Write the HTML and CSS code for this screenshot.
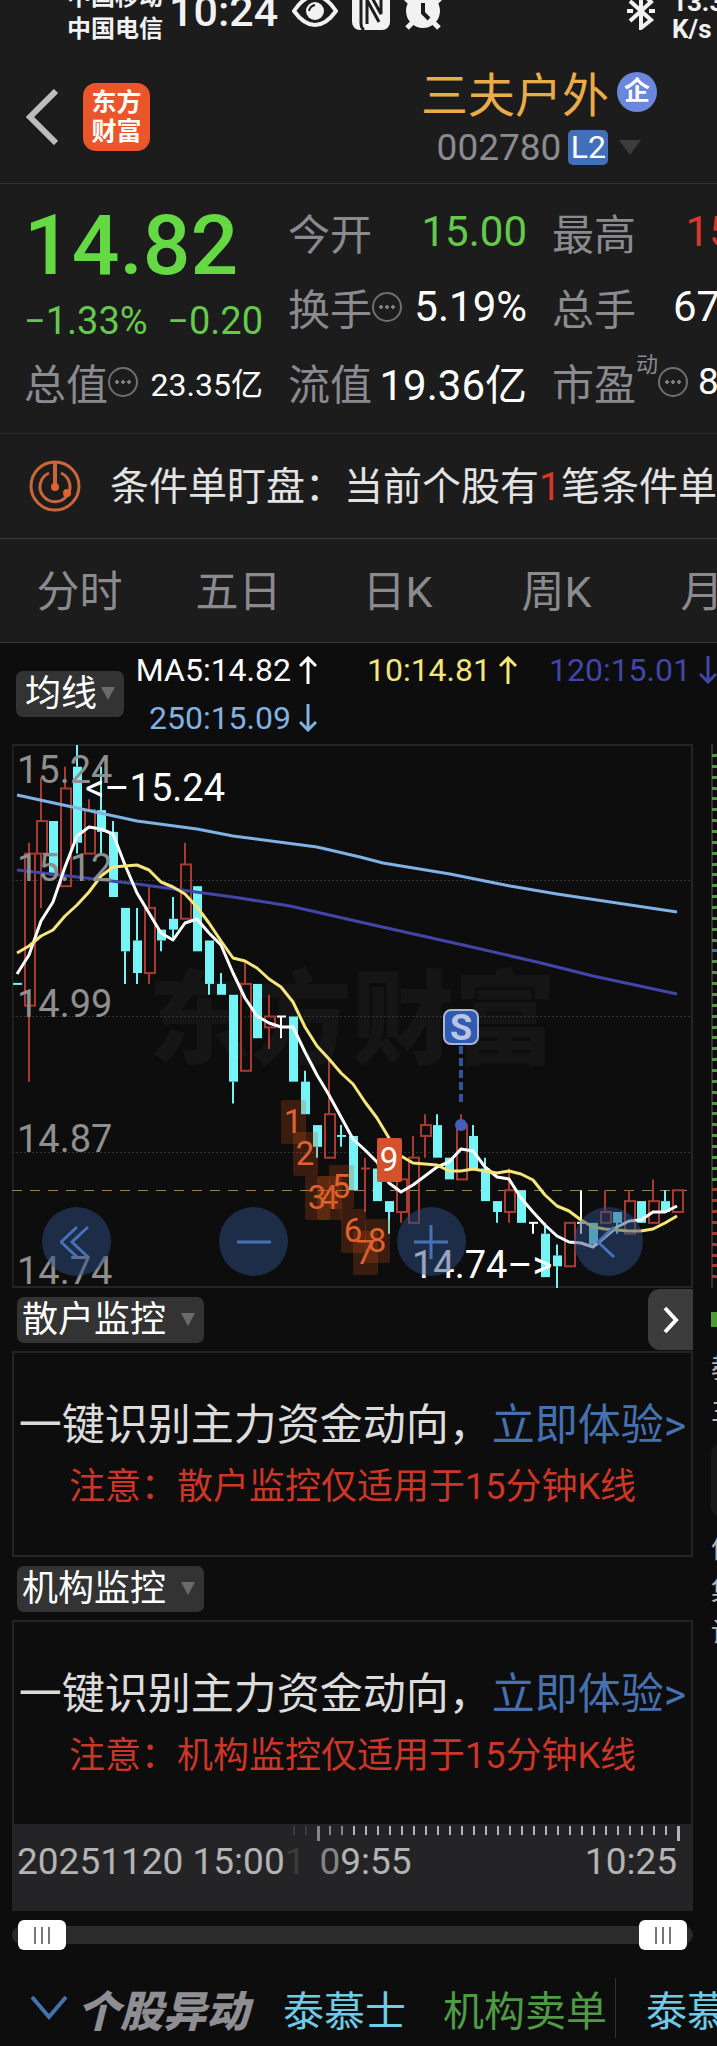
FILE: index.html
```html
<!DOCTYPE html>
<html lang="zh-CN">

<head>
    <meta charset="UTF-8">
    <meta name="viewport" content="width=device-width, initial-scale=1.0">
    <title>三夫户外 002780</title>
    <link rel="stylesheet" href="styles.css">
</head>

<body>
    <div class="status-bar">
        <div class="carrier">
            <span>中国移动</span>
            <span>中国电信</span>
        </div>
        <span class="clock">10:24</span>
        <svg class="status-icon" width="46" height="44" viewBox="0 0 46 44">
            <path d="M2 25 Q12 10 23 10 Q34 10 44 25 Q34 39 23 39 Q12 39 2 25 Z" fill="none" stroke="#f2f2f2" stroke-width="4" />
            <circle cx="23" cy="25" r="9" fill="#f2f2f2" />
            <path d="M17 25 Q18 20 23 19" fill="none" stroke="#1c1c1c" stroke-width="2" />
        </svg>
        <svg class="status-icon" width="38" height="44" viewBox="0 0 38 44">
            <rect x="0" y="4" width="38" height="40" rx="8" fill="#f2f2f2" />
            <path d="M12 44 Q9 42 9 38 V4 M15 38 V14 L27 36 M18 8 L29 28 V8" fill="none" stroke="#1c1c1c" stroke-width="3" />
        </svg>
        <svg class="status-icon" width="38" height="44" viewBox="0 0 38 44">
            <circle cx="19" cy="25" r="17" fill="#f2f2f2" />
            <path d="M8 37 L3 42 M30 37 L35 42 M2 16 L9 9 M36 16 L29 9" stroke="#f2f2f2" stroke-width="5" />
            <path d="M19 17 V27 L25 33" fill="none" stroke="#1c1c1c" stroke-width="4" />
        </svg>
        <svg class="status-icon bluetooth" width="30" height="44" viewBox="0 0 30 44">
            <path d="M4 15 L25 34 L15 42 V6 L25 16 L4 35 M1 25 H7 M23 25 H29" fill="none" stroke="#f2f2f2" stroke-width="4" />
        </svg>
        <div class="speed">
            <span>13.3</span>
            <span>K/s</span>
        </div>
    </div>

    <header class="header">
        <button type="button" class="back" aria-label="返回">
            <svg width="32" height="56" viewBox="0 0 32 56">
                <path d="M30 2 L4 28 L30 54" fill="none" stroke="#bdbdbd" stroke-width="6" />
            </svg>
        </button>
        <div class="logo"><span>东方</span><span>财富</span></div>
        <div class="stock">
            <div class="stock-name">三夫户外<span class="badge-qi">企</span></div>
            <div class="stock-code">002780<span class="badge-l2">L2</span><i class="triangle big"></i></div>
        </div>
    </header>

    <section class="quote">
        <div class="quote-col">
            <div class="price">14.82</div>
            <div class="change"><span>−1.33%</span><span>−0.20</span></div>
            <div class="cell"><span class="name">总值</span><i class="more"></i><span class="value small">23.35亿</span></div>
        </div>
        <div class="quote-col">
            <div class="cell"><span class="name">今开</span><span class="value down">15.00</span></div>
            <div class="cell"><span class="name">换手</span><i class="more"></i><span class="value">5.19%</span></div>
            <div class="cell"><span class="name">流值</span><span class="value">19.36亿</span></div>
        </div>
        <div class="quote-col">
            <div class="cell"><span class="name">最高</span><span class="value up">15.24</span></div>
            <div class="cell"><span class="name">总手</span><span class="value">67432</span></div>
            <div class="cell"><span class="name">市盈</span><span class="sup">动</span><i class="more"></i><span class="value mid">83.24</span></div>
        </div>
    </section>

    <section class="notice">
        <svg width="52" height="52" viewBox="0 0 52 52">
            <g fill="none" stroke="#c9663a" stroke-width="3">
                <circle cx="26" cy="26" r="24" />
                <path d="M20 13 A15 15 0 1 0 32 13" />
                <path d="M26 2 V26" stroke-width="4" />
            </g>
            <circle cx="26" cy="27" r="4" fill="#e0622f" />
            <circle cx="38" cy="33" r="4" fill="#e0622f" />
        </svg>
        <p>条件单盯盘：当前个股有<b>1</b>笔条件单</p>
    </section>

    <nav class="tabs">
        <button type="button">分时</button>
        <button type="button">五日</button>
        <button type="button">日K</button>
        <button type="button">周K</button>
        <button type="button">月K</button>
    </nav>

    <main>
        <div class="legend">
            <label class="picker picker-ma">
                <select aria-label="指标">
                    <option>均线</option>
                </select>
            </label>
            <div class="ma-list">
                <span class="ma5">MA5:14.82<svg width="18" height="28" viewBox="0 0 18 28"><path d="M9 28 V2 M1 10 L9 2 L17 10" /></svg></span>
                <span class="ma10">10:14.81<svg width="18" height="28" viewBox="0 0 18 28"><path d="M9 28 V2 M1 10 L9 2 L17 10" /></svg></span>
                <span class="ma120">120:15.01<svg width="18" height="28" viewBox="0 0 18 28"><path d="M9 0 V26 M1 18 L9 26 L17 18" /></svg></span>
                <span class="ma250">250:15.09<svg width="18" height="28" viewBox="0 0 18 28"><path d="M9 0 V26 M1 18 L9 26 L17 18" /></svg></span>
            </div>
        </div>

        <div class="board">
            <div class="board-main">
                <div class="chart">
                    <svg id="kline" viewBox="0 0 681 544">
                        <text class="watermark" x="136" y="312">东方财富</text>
                        <g class="grid">
                            <path d="M0 136.5 H681 M0 272.5 H681 M0 408.5 H681" stroke-dasharray="2 2" />
                        </g>
                        <rect x="0.5" y="1" width="679.5" height="542" fill="none" stroke="#242424" stroke-width="2" />
                        <path d="M0 446.5 H675" stroke="#9a8250" stroke-dasharray="10 8" />
                        <g id="candles"></g>
                        <g id="lines" fill="none" stroke-width="3" stroke-linejoin="round"></g>
                        <g class="axis">
                            <text x="5" y="39">15.24</text>
                            <text x="5" y="137">15.12</text>
                            <text x="5" y="273">14.99</text>
                            <text x="5" y="408">14.87</text>
                            <text x="5" y="540">14.74</text>
                        </g>
                        <text class="mark" x="213" y="57" text-anchor="end">&lt;–15.24</text>
                        <text class="mark" x="400" y="534">14.74–&gt;</text>
                        <g id="tags"></g>
                        <g>
                            <path d="M449 302 V359" stroke="#34539b" stroke-width="4" stroke-dasharray="8 4" />
                            <circle cx="449" cy="381" r="6" fill="#4560b8" />
                            <rect x="432" y="266" width="34" height="34" rx="7" fill="#2f5bb0" stroke="#a9b6d6" stroke-width="2" />
                            <text class="sell" x="449" y="296" text-anchor="middle">S</text>
                        </g>
                    </svg>
                    <div class="chart-tools">
                        <button type="button" aria-label="最左">
                            <svg width="34" height="34" viewBox="0 0 34 34"><path d="M17 2 L1 17 L17 32 M28 2 L12 17 L28 32" /></svg>
                        </button>
                        <button type="button" aria-label="缩小">
                            <svg width="34" height="34" viewBox="0 0 34 34"><path d="M0 17 H34" /></svg>
                        </button>
                        <button type="button" aria-label="放大">
                            <svg width="34" height="34" viewBox="0 0 34 34"><path d="M0 17 H34 M17 0 V34" /></svg>
                        </button>
                        <button type="button" aria-label="左移">
                            <svg width="34" height="34" viewBox="0 0 34 34"><path d="M23 2 L7 17 L23 32" /></svg>
                        </button>
                    </div>
                </div>

                <div class="bar">
                    <label class="picker">
                        <select aria-label="副图一">
                            <option>散户监控</option>
                        </select>
                    </label>
                    <button type="button" class="next" aria-label="展开">
                        <svg width="16" height="28" viewBox="0 0 16 28"><path d="M2 2 L13 14 L2 26" /></svg>
                    </button>
                </div>
                <div class="panel">
                    <p class="promo">一键识别主力资金动向，<a href="#">立即体验&gt;</a></p>
                    <p class="warn">注意：散户监控仅适用于15分钟K线</p>
                </div>

                <div class="bar">
                    <label class="picker">
                        <select aria-label="副图二">
                            <option>机构监控</option>
                        </select>
                    </label>
                </div>
                <div class="panel">
                    <p class="promo">一键识别主力资金动向，<a href="#">立即体验&gt;</a></p>
                    <p class="warn">注意：机构监控仅适用于15分钟K线</p>
                </div>

                <div class="ruler">
                    <svg id="ticks" viewBox="0 0 681 16"></svg>
                    <div class="times">
                        <span>20251120 15:00</span>
                        <span class="faint">1</span>
                        <span class="from"><i>0</i>9:55</span>
                        <span class="to">10:25</span>
                    </div>
                </div>

                <div class="range">
                    <input type="range" min="0" max="100" value="0" aria-label="起点">
                    <input type="range" min="0" max="100" value="100" aria-label="终点">
                </div>
            </div>

            <aside class="board-side">
                <svg id="depth" width="6" height="544" viewBox="0 0 6 544"></svg>
                <div class="side-dot"></div>
                <div class="side-text"><span>教</span><span>主</span></div>
                <div class="side-box"></div>
                <div class="side-text"><span>信</span><span>集</span><span>设</span></div>
            </aside>
        </div>
    </main>

    <footer class="ticker">
        <svg width="38" height="32" viewBox="0 0 38 32"><path d="M2 5 L19 25 L36 5" fill="none" stroke="#4571b0" stroke-width="4" /></svg>
        <strong>个股异动</strong>
        <span class="who">泰慕士</span>
        <span class="what">机构卖单</span>
        <span class="who next-item">泰慕士</span>
    </footer>

    <script src="script.js"></script>
</body>

</html>
```
FILE: styles.css
```css
* {
    box-sizing: border-box;
}

body {
    margin: 0;
    background-color: #1c1c1c;
    color: #fff;
    font-family: Roboto, "Noto Sans CJK SC", sans-serif;
    overflow-x: hidden;
}

p {
    margin: 0;
}

i {
    font-style: normal;
}

button,
select {
    font-family: inherit;
    color: inherit;
    border: none;
    background: none;
    padding: 0;
    margin: 0;
}

a {
    color: #4571b0;
    text-decoration: none;
}

/* 状态栏 */
.status-bar {
    display: flex;
    align-items: flex-start;
    height: 50px;
    padding-left: 67px;
    overflow: hidden;
    white-space: nowrap;
    color: #f2f2f2;
}

.carrier,
.speed {
    display: flex;
    flex-direction: column;
    font-size: 24px;
    font-weight: bold;
    line-height: 32px;
}

.carrier {
    margin-top: -19px;
}

.speed {
    width: 45px;
    margin: -11px 0 0 16px;
    font-size: 26px;
    line-height: 27px;
}

.clock {
    margin: -12px 14px 0 6px;
    font-size: 43px;
    font-weight: 500;
    line-height: 46px;
}

.status-icon {
    flex: none;
    margin: -14px 14px 0 0;
}

.bluetooth {
    margin: -14px 0 0 auto;
}

/* 标题 */
.header {
    display: flex;
    align-items: center;
    height: 134px;
    padding: 0 60px 0 26px;
    border-bottom: 1px solid #333;
}

.back {
    height: 56px;
}

.logo {
    display: flex;
    flex-direction: column;
    justify-content: center;
    width: 67px;
    height: 68px;
    margin-left: 25px;
    border-radius: 13px;
    background-color: #ea562a;
    font-size: 25px;
    font-weight: bold;
    line-height: 29px;
    text-align: center;
}

.stock {
    display: flex;
    flex-direction: column;
    align-items: center;
    margin-left: auto;
    padding-top: 6px;
}

.stock-name,
.stock-code {
    display: flex;
    align-items: center;
    height: 56px;
}

.stock-name {
    gap: 8px;
    font-size: 47px;
    color: #eaab4a;
}

.stock-code {
    gap: 7px;
    font-size: 37px;
    color: #8a8a8f;
}

.badge-qi {
    width: 40px;
    height: 40px;
    border-radius: 50%;
    background-color: #6b87dc;
    color: #fff;
    font-size: 26px;
    font-weight: bold;
    line-height: 38px;
    text-align: center;
}

.badge-l2 {
    width: 40px;
    height: 35px;
    border-radius: 5px;
    background-color: #4170b8;
    color: #fff;
    font-size: 32px;
    line-height: 35px;
    text-align: center;
}

.triangle {
    border: 7px solid transparent;
    border-top: 12px solid #6b6b6b;
    border-bottom: none;
}

.triangle.big {
    margin-left: 4px;
    border-width: 15px 11px 0;
    border-top-color: #3c3c3c;
}

/* 行情 */
.quote {
    display: grid;
    grid-template-columns: repeat(3, 239px);
    gap: 25px;
    height: 250px;
    padding: 12px 0 0 24px;
    border-bottom: 1px solid #2b2b2b;
    overflow: hidden;
    white-space: nowrap;
}

.price {
    height: 98px;
    color: #65d944;
    font-size: 84px;
    font-weight: 500;
    line-height: 100px;
}

.change {
    display: flex;
    justify-content: space-between;
    height: 52px;
    color: #65c94c;
    font-size: 38px;
    line-height: 54px;
}

.cell {
    display: flex;
    align-items: center;
    height: 75px;
    padding-bottom: 4px;
}

.name {
    color: #8a8a8f;
    font-size: 42px;
}

.more {
    width: 30px;
    height: 30px;
    border: 2px solid #6f6f73;
    border-radius: 50%;
    background: radial-gradient(circle, #7d7d82 2px, transparent 2px) center / 6px 6px repeat-x;
    background-clip: content-box;
    padding: 0 4px;
}

.value {
    margin-left: auto;
    font-size: 42px;
}

.value.mid {
    font-size: 37px;
}

.value.small {
    font-size: 32px;
}

.value.down {
    color: #65c94c;
}

.value.up {
    color: #d8382a;
}

.sup {
    align-self: flex-start;
    color: #8a8a8f;
    font-size: 22px;
    line-height: 38px;
}

/* 条件单 */
.notice {
    display: flex;
    align-items: center;
    gap: 29px;
    height: 105px;
    padding-left: 29px;
    border-bottom: 1px solid #383838;
    overflow: hidden;
    white-space: nowrap;
}

.notice svg {
    flex: none;
}

.notice p {
    padding-bottom: 6px;
    color: #e3e3e3;
    font-size: 39px;
}

.notice b {
    color: #d8382a;
    font-weight: normal;
}

.tabs {
    display: flex;
    height: 104px;
    border-bottom: 1px solid #383838;
    overflow: hidden;
}

.tabs button {
    flex: 0 0 159px;
    padding-bottom: 5px;
    color: #8a8a8f;
    font-size: 43px;
    white-space: nowrap;
}

/* 图表区 */
main {
    background-color: #0d0d0d;
    overflow: hidden;
}

.legend {
    display: flex;
    align-items: center;
    height: 101px;
    padding-left: 16px;
}

.picker {
    display: flex;
    align-items: center;
    position: relative;
    width: 187px;
    height: 46px;
    border-radius: 7px;
    background-color: #333;
}

.picker select {
    appearance: none;
    width: 100%;
    height: 46px;
    padding-left: 5px;
    font-size: 36px;
}

.picker::after {
    content: "";
    position: absolute;
    right: 9px;
    border: 7px solid transparent;
    border-top: 13px solid #6b6b6b;
    border-bottom: none;
    pointer-events: none;
}

.picker-ma {
    flex: none;
    width: 108px;
}

.picker-ma select {
    padding-left: 9px;
}

.ma-list {
    display: grid;
    flex: 1;
    grid-template-columns: 193px 1fr 1fr;
    grid-auto-rows: 48px;
    font-size: 32px;
}

.ma-list span {
    display: flex;
    align-items: center;
    justify-content: flex-end;
    gap: 8px;
}

.ma-list path {
    fill: none;
    stroke: currentColor;
    stroke-width: 3;
}

.ma10 {
    color: #f5e67c;
}

.ma120 {
    color: #4146a8;
}

.ma250 {
    color: #80b2e2;
}

.board {
    display: flex;
    gap: 18px;
    padding-left: 12px;
}

.board-main {
    flex: 1;
    min-width: 0;
}

.chart {
    position: relative;
}

.chart > svg {
    display: block;
    width: 100%;
}

.grid path {
    stroke: #333;
}

.axis text,
.mark {
    font-size: 38px;
    fill: #8f8f8f;
}

.mark {
    fill: #fff;
}

.watermark {
    font-size: 102px;
    font-weight: 900;
    fill: #151515;
}

.sell {
    font-size: 36px;
    font-weight: bold;
    fill: #b9c5e2;
}

.tag {
    font-size: 33px;
    fill: #e0622f;
}

.chart-tools {
    position: absolute;
    left: 30px;
    right: 50px;
    bottom: 12px;
    display: flex;
    justify-content: space-between;
}

.chart-tools button {
    display: flex;
    align-items: center;
    justify-content: center;
    width: 69px;
    height: 69px;
    border-radius: 50%;
    background-color: rgba(46, 76, 130, 0.5);
}

.chart-tools path {
    fill: none;
    stroke: #4673b8;
    stroke-width: 3;
}

.bar {
    display: flex;
    align-items: center;
    justify-content: space-between;
    height: 63px;
    padding-left: 5px;
}

.next {
    display: flex;
    align-items: center;
    justify-content: center;
    width: 45px;
    height: 61px;
    border-radius: 12px 0 0 12px;
    background-color: #3c3c3c;
}

.next path {
    fill: none;
    stroke: #fff;
    stroke-width: 4;
}

.panel {
    height: 206px;
    padding-top: 41px;
    border: 2px solid #242424;
    text-align: center;
    white-space: nowrap;
}

.promo {
    color: #dcdcdc;
    font-size: 43px;
    line-height: 62px;
}

.warn {
    color: #cc3629;
    font-size: 36px;
    line-height: 62px;
}

.ruler {
    height: 85px;
    background-color: #242426;
}

.ruler svg {
    display: block;
    width: 100%;
}

.times {
    display: flex;
    padding: 0 16px 0 5px;
    color: #b4b4b4;
    font-size: 37px;
    line-height: 40px;
    white-space: nowrap;
}

.faint {
    color: #3c3c3c;
}

.from {
    margin-left: 14px;
}

.from i {
    color: #858585;
}

.to {
    margin-left: auto;
}

.range {
    position: relative;
    height: 48px;
    padding-top: 15px;
}

.range::before {
    content: "";
    display: block;
    height: 18px;
    border-radius: 9px;
    background-color: #2b2b2d;
}

/* 两个滑块叠在同一条轨道上 */
.range input {
    position: absolute;
    left: 6px;
    right: 6px;
    top: 9px;
    width: calc(100% - 12px);
    height: 30px;
    margin: 0;
    appearance: none;
    background: none;
    pointer-events: none;
}

.range input::-webkit-slider-thumb {
    appearance: none;
    width: 48px;
    height: 30px;
    border-radius: 6px;
    background:
        linear-gradient(#777, #777) 16px 7px / 2px 17px no-repeat,
        linear-gradient(#777, #777) 23px 7px / 2px 17px no-repeat,
        linear-gradient(#777, #777) 30px 7px / 2px 17px no-repeat,
        #fff;
    pointer-events: auto;
}

/* 右侧盘口，只露出一条边 */
.board-side {
    flex: 0 0 6px;
    overflow: hidden;
}

.board-side svg {
    display: block;
}

.side-dot {
    height: 15px;
    margin: 24px 0 21px;
    background-color: #4f9a35;
}

.side-text {
    display: flex;
    flex-direction: column;
    color: #b4b4b4;
    font-size: 27px;
    line-height: 42px;
}

.side-box {
    width: 60px;
    height: 71px;
    margin: 13px 0 12px;
    border-radius: 8px;
    background-color: #18181a;
}

/* 个股异动 */
.ticker {
    display: flex;
    align-items: center;
    height: 87px;
    padding: 10px 0 0 30px;
    background-color: #0d0d0d;
    font-size: 41px;
    white-space: nowrap;
    overflow: hidden;
}

.ticker svg {
    flex: none;
}

.ticker strong {
    margin: 0 34px 0 9px;
    color: #8e8e93;
    font-size: 43px;
    font-weight: 900;
    font-style: italic;
}

.who {
    color: #6fcbe6;
}

.what {
    margin-left: 37px;
    color: #4f9a45;
}

.next-item {
    margin-left: 8px;
    padding-left: 30px;
    border-left: 1px solid #333;
}
```
FILE: script.js
```js
// 每根K线: 颜色, 最高, 实体上沿, 实体下沿, 最低, 单位为距15.24的分数
var candles = [
    ['d', 22, 22, 22, 22], ['u', 9, 10, 24, 31], ['u', 3, 7, 10, 15], ['d', 7, 7, 12, 12],
    ['u', 2, 4, 13, 13], ['d', 0, 2, 9, 10], ['u', 5, 6, 10, 10], ['d', 2, 6, 8, 10],
    ['d', 7, 8, 14, 14], ['d', 15, 15, 19, 22], ['d', 15, 18, 21, 22], ['u', 13, 15, 21, 22],
    ['d', 17, 17, 18, 19], ['d', 14, 16, 17, 18], ['u', 9, 11, 16, 16], ['d', 13, 13, 19, 19],
    ['d', 18, 18, 22, 23], ['d', 21, 22, 23, 23], ['d', 23, 23, 31, 33], ['u', 20, 22, 30, 30],
    ['d', 22, 22, 27, 27], ['u', 23, 25, 26, 28], ['w', 25, 25, 25, 27], ['d', 25, 25, 31, 31],
    ['d', 30, 31, 34, 34], ['d', 35, 35, 37, 38], ['u', 29, 34, 38, 38], ['d', 35, 36, 36, 37],
    ['d', 36, 36, 41, 41], ['u', 38, 39, 39, 43], ['d', 39, 39, 42, 42], ['d', 42, 42, 43, 45],
    ['u', 39, 40, 43, 44], ['u', 36, 38, 44, 44], ['u', 34, 35, 36, 38], ['d', 34, 35, 38, 38],
    ['d', 38, 38, 40, 40], ['u', 34, 35, 40, 40], ['d', 35, 36, 39, 39], ['d', 38, 39, 42, 42],
    ['d', 42, 42, 43, 44], ['u', 39, 41, 43, 44], ['d', 41, 41, 44, 44], ['w', 44, 44, 44, 45],
    ['d', 44, 45, 49, 49], ['d', 46, 47, 48, 50], ['u', 44, 44, 48, 48], ['w', 41, 44, 44, 45],
    ['d', 44, 44, 46, 46], ['u', 41, 43, 44, 44], ['d', 43, 43, 44, 45], ['u', 41, 42, 45, 45],
    ['d', 42, 42, 44, 44], ['u', 40, 42, 44, 44], ['d', 41, 42, 43, 43], ['u', 41, 41, 43, 43]
];

var ma5 = [230, 211, 177, 158, 123, 92, 83, 85, 90, 121, 149, 169, 189, 196, 179, 175, 189, 201, 229, 254,
    272, 279, 283, 283, 308, 331, 351, 373, 395, 406, 418, 439, 448, 441, 432, 423, 418, 405, 407, 423,
    433, 435, 454, 468, 481, 492, 498, 499, 503, 493, 483, 477, 476, 468, 468, 462];
var ma10 = [209, 202, 192, 186, 172, 161, 148, 132, 123, 122, 121, 126, 138, 143, 150, 163, 179, 197, 214, 217,
    224, 235, 243, 258, 283, 302, 315, 329, 340, 358, 374, 394, 412, 419, 420, 421, 427, 427, 425, 427,
    429, 427, 430, 436, 451, 462, 467, 476, 483, 485, 486, 487, 487, 485, 479, 472];

var colors = { u: '#a83a32', d: '#74f4f4', w: '#fff' };
var unit = 10.86;
var step = 12;

function toPoints(list) {
    return list.map(function (y, i) { return (5 + i * step) + ',' + y; }).join(' ');
}

function line(x1, y1, x2, y2, color) {
    return '<path d="M' + x1 + ' ' + y1 + ' L' + x2 + ' ' + y2 + '" stroke="' + color + '" stroke-width="2"/>';
}

function drawCandles() {
    var html = '';
    candles.forEach(function (k, i) {
        var x = 5 + i * step;
        var c = colors[k[0]];
        var high = k[1] * unit + 1, top = k[2] * unit + 1, bottom = k[3] * unit + 1, low = k[4] * unit + 1;
        html += line(x, high, x, top, c) + line(x, bottom, x, low, c);
        if (k[2] === k[3]) {
            html += line(x - 4, top, x + 5, top, c);
        } else if (k[0] === 'u') {
            html += '<rect x="' + (x - 4) + '" y="' + top + '" width="10" height="' + (bottom - top) + '" fill="none" stroke="' + c + '" stroke-width="2"/>';
        } else {
            html += '<rect x="' + (x - 4) + '" y="' + top + '" width="9" height="' + (bottom - top) + '" fill="' + c + '"/>';
        }
    });
    document.getElementById('candles').innerHTML = html;
}

function drawLines() {
    var ma120 = '5,126 125,140 221,153 278,162 348,178 451,201 525,218 581,232 665,250';
    var ma250 = '5,51 125,77 185,85 221,92 305,103 348,113 371,119 438,130 498,142 545,150 605,159 665,168';
    document.getElementById('lines').innerHTML =
        '<polyline points="' + ma250 + '" stroke="#7fb2e5"/>' +
        '<polyline points="' + ma120 + '" stroke="#4146a8"/>' +
        '<polyline points="' + toPoints(ma5) + '" stroke="#fff"/>' +
        '<polyline points="' + toPoints(ma10) + '" stroke="#f5e67c"/>';
}

// 九转序列
function drawTags() {
    var tags = [[269, 356], [281, 388], [293, 432], [305, 432], [317, 421], [329, 465], [341, 487], [353, 475], [365, 394]];
    document.getElementById('tags').innerHTML = tags.map(function (t, i) {
        var last = i === 8;
        return '<rect x="' + t[0] + '" y="' + t[1] + '" width="25" height="44" rx="2" fill="' + (last ? '#d4522b' : 'rgba(200,80,25,0.25)') + '"/>' +
            '<text class="tag" text-anchor="middle" x="' + (t[0] + 12) + '" y="' + (t[1] + 33) + '"' + (last ? ' style="fill:#fff"' : '') + '>' + (i + 1) + '</text>';
    }).join('');
}

function drawTicks() {
    var html = '';
    for (var i = 0; i <= 32; i++) {
        var major = i === 2 || i === 32;
        var color = i < 2 ? '#3a3a3a' : i < 5 ? '#858585' : '#b4b4b4';
        html += '<rect x="' + (281 + i * step) + '" y="0" width="' + (major ? 3 : 2) + '" height="' + (major ? 15 : 9) + '" fill="' + color + '"/>';
    }
    document.getElementById('ticks').innerHTML = html;
}

function drawDepth() {
    var html = '<rect width="2" height="544" fill="#333"/>';
    for (var i = 0; i < 49; i++) {
        var color = i === 18 ? '#4b7199' : i < 40 ? '#58964a' : '#a83a32';
        html += '<rect x="1" y="' + (10 + Math.round(i * unit)) + '" width="5" height="3" fill="' + color + '"/>';
    }
    document.getElementById('depth').innerHTML = html;
}

drawCandles();
drawLines();
drawTags();
drawTicks();
drawDepth();
```
